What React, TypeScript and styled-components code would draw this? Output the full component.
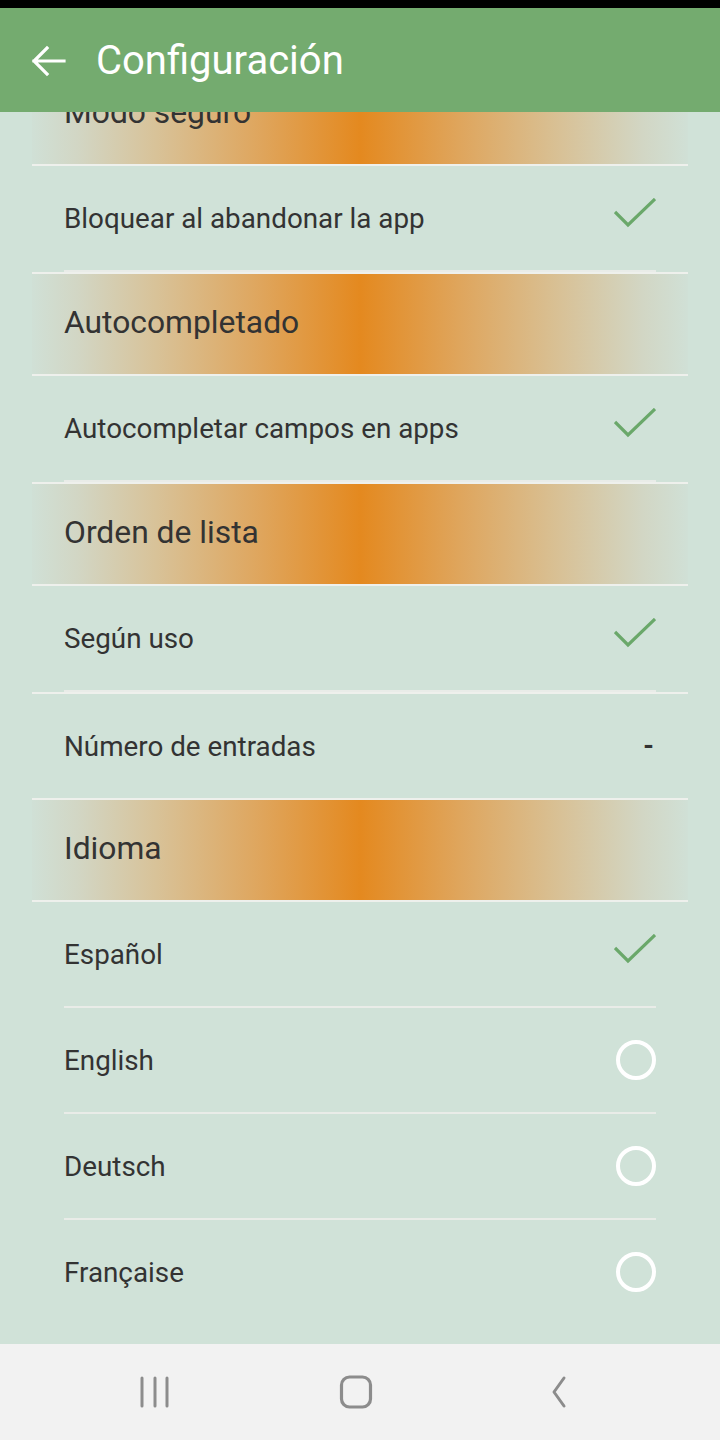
import React from "react";
import styled, { createGlobalStyle } from "styled-components";

const Global = createGlobalStyle`
  html, body { margin: 0; padding: 0; }
  body { font-family: Roboto, "Noto Sans", sans-serif; background: #d0e2d8; }
  * { box-sizing: border-box; }
`;

const Screen = styled.div`
  width: 720px;
  height: 1440px;
  display: flex;
  flex-direction: column;
  background: #d0e2d8;
  overflow: hidden;
`;

const StatusBar = styled.div`
  height: 8px;
  background: #000;
  flex: none;
`;

const AppBar = styled.header`
  height: 104px;
  flex: none;
  background: #74ab6f;
  display: flex;
  align-items: center;
  padding-left: 24px;
  gap: 24px;
  position: relative;
  z-index: 2;
`;

const BackButton = styled.div`
  width: 48px;
  height: 48px;
  display: flex;
  align-items: center;
  justify-content: center;
  margin-top: 2px;
`;

const Title = styled.h1`
  margin: 0;
  font-family: Roboto, sans-serif;
  font-weight: 400;
  font-size: 40px;
  color: #fff;
  letter-spacing: 0;
`;

const Content = styled.main`
  flex: 1;
  overflow: hidden;
  position: relative;
  z-index: 1;
`;

const List = styled.div`
  margin: -50px 32px 0;
  display: flex;
  flex-direction: column;
`;

const SectionHeader = styled.div`
  height: 104px;
  border-top: 2px solid #eef0ec;
  border-bottom: 2px solid #eef0ec;
  display: flex;
  align-items: center;
  padding: 0 32px 4px;
  background: linear-gradient(
    to right,
    #d0e0d6 0%,
    #d2d6c4 7%,
    #d8c298 19%,
    #dfa55c 35%,
    #e4891f 50%,
    #dfa55c 65%,
    #d8c298 81%,
    #d2d6c4 93%,
    #d0e0d6 100%
  );
  font-size: 31.8px;
  color: #333;
`;

const Row = styled.div<{ $divider?: boolean }>`
  height: ${(p) => (p.$divider ? 106 : 104)}px;
  margin: 0 32px;
  display: flex;
  align-items: center;
  justify-content: space-between;
  border-bottom: ${(p) => (p.$divider ? "2px solid #e9ece8" : "none")};
`;

const RowLabel = styled.span`
  font-size: 27.8px;
  color: #333;
`;

const FullLine = styled.div`
  height: 2px;
  background: #eef0ec;
`;

const Dash = styled.span`
  font-size: 27px;
  font-weight: 700;
  color: #333;
  margin-right: 2px;
`;

const Radio = styled.span`
  width: 40px;
  height: 40px;
  border-radius: 50%;
  border: 4px solid #fff;
  display: block;
`;

const CheckSvg = styled.svg`
  display: block;
  margin-bottom: 2px;
`;

const NavBar = styled.nav`
  height: 96px;
  flex: none;
  background: #f2f2f2;
  display: flex;
  justify-content: center;
  align-items: center;
  padding-right: 8px;
`;

const NavItem = styled.div`
  width: 201px;
  display: flex;
  justify-content: center;
  align-items: center;
`;

const Check = () => (
  <CheckSvg width="42" height="38" viewBox="0 0 42 38">
    <polyline
      points="1,14 14,27 41,1"
      fill="none"
      stroke="#6aa86a"
      strokeWidth="3.2"
    />
  </CheckSvg>
);

type Item =
  | { kind: "header"; label: string }
  | { kind: "check"; label: string; divider?: boolean }
  | { kind: "radio"; label: string; divider?: boolean }
  | { kind: "value"; label: string; value: string }
  | { kind: "line" };

const items: Item[] = [
  { kind: "header", label: "Modo seguro" },
  { kind: "check", label: "Bloquear al abandonar la app", divider: true },
  { kind: "header", label: "Autocompletado" },
  { kind: "check", label: "Autocompletar campos en apps", divider: true },
  { kind: "header", label: "Orden de lista" },
  { kind: "check", label: "Según uso", divider: true },
  { kind: "line" },
  { kind: "value", label: "Número de entradas", value: "-" },
  { kind: "header", label: "Idioma" },
  { kind: "check", label: "Español", divider: true },
  { kind: "radio", label: "English", divider: true },
  { kind: "radio", label: "Deutsch", divider: true },
  { kind: "radio", label: "Française" },
];

export default function App() {
  return (
    <>
      <Global />
      <Screen>
        <StatusBar />
        <AppBar>
          <BackButton>
            <svg width="48" height="48" viewBox="0 0 24 24">
              <path
                d="M20 12H5M11.5 5.5 5 12l6.5 6.5"
                fill="none"
                stroke="#fff"
                strokeWidth="1.6"
                strokeLinecap="square"
              />
            </svg>
          </BackButton>
          <Title>Configuración</Title>
        </AppBar>
        <Content>
          <List>
            {items.map((it, i) => {
              if (it.kind === "header")
                return <SectionHeader key={i}>{it.label}</SectionHeader>;
              if (it.kind === "line") return <FullLine key={i} />;
              if (it.kind === "value")
                return (
                  <Row key={i}>
                    <RowLabel>{it.label}</RowLabel>
                    <Dash>{it.value}</Dash>
                  </Row>
                );
              return (
                <Row key={i} $divider={it.divider}>
                  <RowLabel>{it.label}</RowLabel>
                  {it.kind === "check" ? <Check /> : <Radio />}
                </Row>
              );
            })}
          </List>
        </Content>
        <NavBar>
          <NavItem>
            <svg width="34" height="34" viewBox="0 0 34 34">
              <g stroke="#8c8c8c" strokeWidth="3" strokeLinecap="round">
                <line x1="4" y1="3" x2="4" y2="31" />
                <line x1="17" y1="3" x2="17" y2="31" />
                <line x1="29" y1="3" x2="29" y2="31" />
              </g>
            </svg>
          </NavItem>
          <NavItem>
            <svg width="34" height="34" viewBox="0 0 34 34">
              <rect
                x="2.5"
                y="2"
                width="29"
                height="30"
                rx="8"
                fill="none"
                stroke="#8c8c8c"
                strokeWidth="3.2"
              />
            </svg>
          </NavItem>
          <NavItem>
            <svg width="34" height="34" viewBox="0 0 34 34">
              <polyline
                points="24,3 14,17 24,31"
                fill="none"
                stroke="#8c8c8c"
                strokeWidth="3"
                strokeLinecap="round"
                strokeLinejoin="round"
              />
            </svg>
          </NavItem>
        </NavBar>
      </Screen>
    </>
  );
}
